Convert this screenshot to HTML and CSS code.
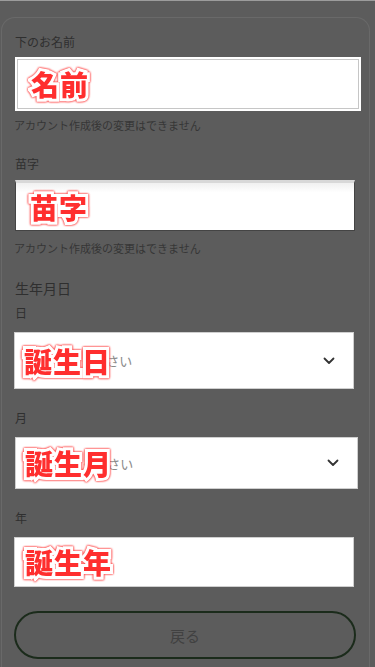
FILE: index.html
```html
<!DOCTYPE html>
<html lang="ja">
<head>
<meta charset="utf-8">
<meta name="viewport" content="width=device-width, initial-scale=1">
<link rel="stylesheet" href="styles.css">
</head>
<body>
<div class="screen">
  <div class="card">
    <div class="label">下のお名前</div>
    <div class="box box-wide box-name">
      <span class="note note-in">名前</span>
    </div>
    <div class="help">アカウント作成後の変更はできません</div>

    <div class="label label-gap">苗字</div>
    <div class="box box-sur">
      <span class="note note-in">苗字</span>
    </div>
    <div class="help help-2">アカウント作成後の変更はできません</div>

    <div class="section">生年月日</div>
    <div class="label label-small">日</div>
    <div class="box box-select box-day">
      <span class="placeholder">選択してください</span>
      <svg class="chev" width="12" height="8" viewBox="0 0 12 8"><path d="M1.5 1.5 L6 6 L10.5 1.5" fill="none" stroke="#333" stroke-width="1.8" stroke-linecap="round" stroke-linejoin="round"/></svg>
      <span class="note note-over">誕生日</span>
    </div>

    <div class="label label-gap2">月</div>
    <div class="box box-select box-month">
      <span class="placeholder">選択してください</span>
      <svg class="chev" width="12" height="8" viewBox="0 0 12 8"><path d="M1.5 1.5 L6 6 L10.5 1.5" fill="none" stroke="#333" stroke-width="1.8" stroke-linecap="round" stroke-linejoin="round"/></svg>
      <span class="note note-over">誕生月</span>
    </div>

    <div class="label label-gap2">年</div>
    <div class="box box-year">
      <span class="note note-year">誕生年</span>
    </div>

    <button class="back">戻る</button>
  </div>
</div>
</body>
</html>
```

FILE: styles.css
```css
* { box-sizing: border-box; }
html, body {
  margin: 0;
  padding: 0;
  background: #5c5c5c;
}
body {
  font-family: "Noto Sans CJK JP", "Noto Sans", sans-serif;
  color: #2e2e2e;
  width: 375px;
  height: 667px;
  overflow: hidden;
}
.screen {
  border-top: 1px solid #9c9c9c;
  padding-top: 16px;
  height: 667px;
  overflow: hidden;
}
.card {
  margin-left: 1px;
  width: 369px;
  height: 650px;
  border: 1px solid #696969;
  border-bottom: none;
  border-radius: 14px 14px 0 0;
  padding: 16px 15px 0 12px;
  display: flex;
  flex-direction: column;
  align-items: flex-start;
}
.label {
  font-size: 12px;
  line-height: 16px;
  color: #2f2f2f;
  margin-left: 1px;
}
.label-gap { margin-top: 24px; }
.label-small { margin-top: 7px; }
.label-gap2 { margin-top: 21px; }
.section {
  font-size: 14px;
  line-height: 20px;
  color: #2f2f2f;
  margin-top: 23px;
  margin-left: 1px;
}
.help {
  font-size: 11px;
  line-height: 14px;
  color: #363636;
  margin-top: 7px;
}
.help-2 { margin-top: 10px; }
.box {
  position: relative;
  width: 340px;
  background: #fff;
  border: 1px solid #cfcfcf;
  display: flex;
  align-items: center;
  margin-top: 7px;
}
.box-wide {
  width: 346px;
  margin-left: 1px;
  height: 54px;
  border: 2px solid #fff;
  box-shadow: inset 0 0 0 1px #c6c6c6;
}
.box-sur {
  margin-top: 8px;
  margin-left: 1px;
  height: 51px;
  border: 1px solid #444;
  border-top: 3px solid #d8d8d8;
  background: linear-gradient(#f0f0f0, #fff 20%);
}
.box-select {
  margin-top: 11px;
  justify-content: space-between;
  padding: 0 18px 0 14px;
}
.box-day { height: 57px; }
.box-month { height: 52px; width: 343px; margin-left: 1px; }
.box-year { height: 50px; margin-top: 11px; }
.placeholder {
  font-size: 13px;
  color: #8a8a8a;
  letter-spacing: 0;
}
.chev { display: block; }
.note {
  font-size: 28px;
  line-height: 32px;
  font-weight: 900;
  color: #ff2e2e;
  -webkit-text-stroke: 6px #fff;
  paint-order: stroke fill;
  filter: drop-shadow(0 0 0.8px #ff4040) drop-shadow(0 0 0.4px #ff4040);
  letter-spacing: 1px;
}
.note-in { margin-left: 14px; }
.note-year { margin-left: 10px; }
.note-over {
  position: absolute;
  left: 9px;
  top: 50%;
  transform: translateY(-50%);
}
.back {
  margin-top: 24px;
  width: 342px;
  height: 48px;
  border: 2px solid #1b2b1b;
  border-radius: 24px;
  background: transparent;
  font-family: inherit;
  font-size: 15px;
  color: #414141;
  cursor: pointer;
}
```
